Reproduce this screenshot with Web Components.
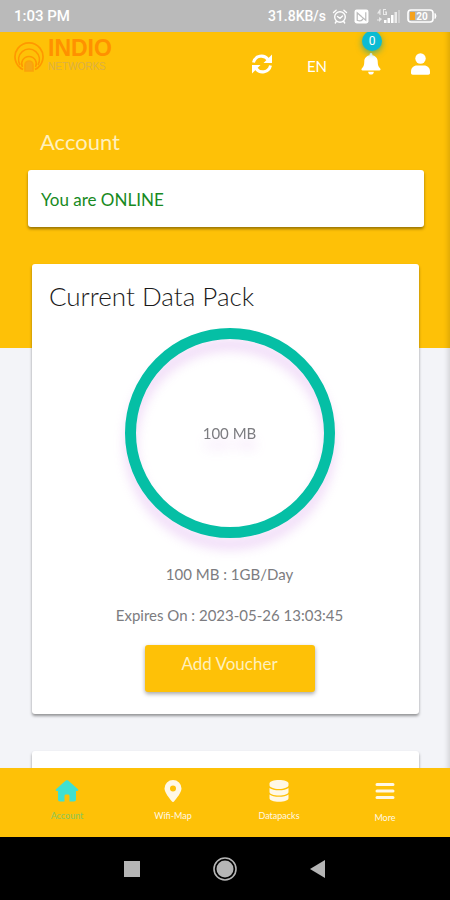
<!DOCTYPE html>
<html lang="en">
<head>
<meta charset="utf-8">
<meta name="viewport" content="width=device-width, initial-scale=1">
<title>Account</title>
<style>
  :root {
    --brand: #fec107;
    --page: #f3f4f8;
    --ring: #05bfa5;
    --active: #40e0d0;
    --muted: #7c7c80;
    --font: Lato, "Noto Sans", sans-serif;
    --system: Roboto, "Liberation Sans", sans-serif;
  }
  html, body { height: 100%; }
  body { margin: 0; font-family: var(--font); background: var(--page); }
</style>
</head>
<body>
<phone-screen>
  <status-bar slot="status" time="1:03 PM" speed="31.8KB/s" battery="20"></status-bar>
  <app-header slot="header" lang-code="EN" count="0"></app-header>
  <section-title>Account</section-title>
  <status-card>You are ONLINE</status-card>
  <data-card>
    <span slot="title">Current Data Pack</span>
    <usage-ring slot="ring">100 MB</usage-ring>
    <span slot="plan">100 MB : 1GB/Day</span>
    <span slot="expiry">Expires On : 2023-05-26 13:03:45</span>
    <voucher-button slot="action">Add Voucher</voucher-button>
  </data-card>
  <data-card empty></data-card>
  <tab-bar slot="tabs">
    <tab-item icon="home" active>Account</tab-item>
    <tab-item icon="pin">Wifi-Map</tab-item>
    <tab-item icon="database">Datapacks</tab-item>
    <tab-item icon="menu">More</tab-item>
  </tab-bar>
  <system-nav slot="system"></system-nav>
</phone-screen>

<script>
const define = (name, render) => customElements.define(name, class extends HTMLElement {
  constructor() {
    super();
    this.attachShadow({ mode: "open" });
  }
  connectedCallback() {
    const template = document.createElement("template");
    template.innerHTML = render(this);
    this.shadowRoot.replaceChildren(template.content.cloneNode(true));
  }
});

define("phone-screen", () => `
  <style>
    :host { display: flex; flex-direction: column; height: 100vh; overflow: hidden; }
    .app { flex: 1; min-height: 0; overflow: hidden; box-sizing: border-box;
      display: flex; flex-direction: column;
      background: linear-gradient(var(--brand) 316px, var(--page) 316px);
      box-shadow: inset -6px 0 6px -5px rgba(0,0,0,.18); }
    main { display: flex; flex-direction: column; padding: 24px 26px 0 28px; }
  </style>
  <slot name="status"></slot>
  <div class="app"><slot name="header"></slot><main><slot></slot></main></div>
  <slot name="tabs"></slot>
  <slot name="system"></slot>`);

define("status-bar", el => `
  <style>
    :host { display: flex; align-items: center; justify-content: space-between; flex: none;
      height: 32px; padding: 0 12px 0 14px; background: #bababa; color: #fff;
      font: 500 15px/20px var(--system); }
    .right { display: flex; align-items: center; gap: 6px; font-size: 14px; }
    svg { display: block; }
  </style>
  <span>${el.getAttribute("time")}</span>
  <div class="right">
    <span>${el.getAttribute("speed")}</span>
    <svg width="16" height="15" viewBox="0 0 15 15" fill="none" stroke="#fff" stroke-width="1.4" stroke-linecap="round"><circle cx="7.500" cy="8" r="5.300"/><path d="M1 3.500 3.600 1.200M14 3.500 11.400 1.200M5 7.500l2.500 1.800L10 7M3.800 12.500l-1 1.500M11.200 12.500l1 1.500"/></svg>
    <svg width="15" height="15" viewBox="0 0 14 14"><rect x=".5" y=".5" width="13" height="13" rx="2" fill="#fff"/><path d="M3 11V3.500l4 3.500M11 3v7.500L5 5.500M3 10.500c3 1.500 5 0 6-2" fill="none" stroke="#bababa" stroke-width="1.100"/></svg>
    <svg width="26" height="16" viewBox="0 0 26 16" fill="#fff"><path d="M5 1 2 5.500h2.500V7h1V1zM8 1h3v1H9v4h1.500V4.500H10v-1h2V7H8zM4 9l3 2-3 3v-1.500H2v-1h2z" opacity=".7"/><rect x="9" y="12" width="2.500" height="3"/><rect x="12.500" y="10" width="2.500" height="5"/><rect x="16" y="7" width="2.500" height="8"/><rect x="19.500" y="4" width="2.500" height="11" opacity=".7"/><rect x="23" y="2" width="2" height="13" opacity=".3"/></svg>
    <svg width="31" height="14" viewBox="0 0 31 14"><rect x="1" y="1" width="25" height="12" rx="3" fill="none" stroke="#fff" stroke-width="1.600"/><path d="M28 4.500q2 2.500 0 5z" fill="#fff" stroke="#fff"/><rect x="3" y="3" width="5" height="8" fill="#f5a21d"/><text x="15" y="10.500" font-size="10" font-weight="700" text-anchor="middle" fill="#fff">${el.getAttribute("battery")}</text></svg>
  </div>`);

define("brand-logo", () => `
  <style>
    :host { display: block; }
    a { display: flex; align-items: center; gap: 4px; color: #ff9100; text-decoration: none; }
    svg { display: block; }
    .name { display: block; font: 700 23px/20px "Liberation Sans", sans-serif; }
    .sub { display: block; padding-top: 3px; font: 400 10px/12px "Liberation Sans", sans-serif; color: #dcb044; }
  </style>
  <a href="#home" aria-label="Indio Networks">
    <svg width="30" height="32" viewBox="0 0 30 32" fill="none" stroke="#ff9800" stroke-width="1.700"><path d="M9 29.500A14 14 0 1 1 21 29.500"/><path d="M6 25a10.500 10.500 0 1 1 18 0M8.500 27a7.300 7.300 0 1 1 13 0" stroke-width="1.500"/><path d="M11 31v-6a4 4 0 0 1 8 0v6z" fill="#f7a814" stroke="#fba30b"/></svg>
    <span><span class="name">INDIO</span><span class="sub">NETWORKS</span></span>
  </a>`);

define("app-header", el => `
  <style>
    :host { display: flex; justify-content: space-between; align-items: flex-start; flex: none;
      height: 74px; padding: 6px 20px 0 14px; box-sizing: border-box; }
    .actions { display: flex; align-items: center; gap: 30px; padding-top: 12px; }
    button { position: relative; display: block; margin: 0; padding: 0; border: 0; background: none;
      color: #fff; font: 400 15px/24px var(--font); }
    .lang { padding: 4px 4px 0; }
    svg { display: block; }
    .badge { position: absolute; left: 1px; top: -22px; width: 20px; height: 20px; border-radius: 50%;
      background: #0bbbd3; box-shadow: 0 2px 6px rgba(11,160,150,.7);
      font: 400 12px/20px var(--system); text-align: center; }
  </style>
  <brand-logo></brand-logo>
  <div class="actions">
    <button aria-label="Refresh"><svg width="22" height="20" viewBox="0 0 22 20"><g fill="none" stroke="#fff" stroke-width="3"><path d="M2.500 8.500C4 1.500 13 0 17 5.500M19.500 11.500C18 18.500 9 20 5 14.500"/></g><path d="M21 .5V9h-8.500zM1 19.500V11h8.500z" fill="#fff"/></svg></button>
    <button class="lang" aria-label="Language">${el.getAttribute("lang-code")}</button>
    <button aria-label="Notifications"><svg width="20" height="22" viewBox="0 0 20 22" fill="#fff"><path d="M10 0c.8 0 1.400.6 1.400 1.400v.8c3.200.6 5.300 3 5.300 6.300 0 4 1 5.500 2.500 7 .8.800.3 2-.8 2H1.600c-1.100 0-1.600-1.200-.8-2 1.500-1.500 2.500-3 2.500-7 0-3.300 2.100-5.700 5.300-6.300v-.8C8.600.6 9.200 0 10 0zM7.200 18.700h5.600a2.800 2.800 0 0 1-5.600 0z"/></svg><span class="badge">${el.getAttribute("count")}</span></button>
    <button aria-label="Profile"><svg width="19" height="22" viewBox="0 0 19 22" fill="#fff"><circle cx="9.500" cy="5.500" r="5.200"/><path d="M6 12.500h7c3.500 0 6 2.500 6 6v1.500c0 1-.7 1.700-1.700 1.700H1.700C.7 21.700 0 21 0 20v-1.500c0-3.500 2.500-6 6-6z"/></svg></button>
  </div>`);

define("section-title", () => `
  <style>
    :host { display: block; padding: 0 12px; }
    h1 { margin: 0; font: 400 22px/24px var(--font); color: #fff0bd; }
  </style>
  <h1><slot></slot></h1>`);

define("status-card", () => `
  <style>
    :host { display: block; margin-top: 16px; padding: 20px 13px 17px; border-radius: 3px; background: #fff;
      box-shadow: 0 2px 3px rgba(0,0,0,.4); color: #178a22; font: 400 17px/20px var(--font); }
  </style>
  <slot></slot>`);

define("data-card", el => `
  <style>
    :host { display: flex; flex-direction: column; margin: 37px 5px 0 4px; padding: 18px 17px 22px;
      min-height: 60px; box-sizing: border-box; border-radius: 3px; background: #fff;
      box-shadow: 0 2px 3px rgba(0,0,0,.4); }
    h2 { margin: 0; font: 300 26px/28px var(--font); color: #1a1a1a; }
    .body { display: flex; flex-direction: column; align-items: center; padding: 18px 0 0 8px;
      color: var(--muted); font: 400 15px/20px var(--font); }
    p { margin: 0; }
    .plan { margin-top: 26px; }
    .expiry { margin: 21px 0 20px; }
  </style>
  ${el.hasAttribute("empty") ? "" : `
  <h2><slot name="title"></slot></h2>
  <div class="body">
    <slot name="ring"></slot>
    <p class="plan"><slot name="plan"></slot></p>
    <p class="expiry"><slot name="expiry"></slot></p>
    <slot name="action"></slot>
  </div>`}`);

define("usage-ring", () => `
  <style>
    :host { display: flex; align-items: center; justify-content: center; box-sizing: border-box;
      width: 210px; height: 210px; border: 11px solid var(--ring); border-radius: 50%;
      filter: drop-shadow(0 11px 6px rgba(190,90,220,.24)); }
  </style>
  <slot></slot>`);

define("voucher-button", () => `
  <style>
    :host { display: block; }
    button { display: block; margin: 0; padding: 9px 36px 18px; border: 0; border-radius: 3px;
      background: var(--brand); box-shadow: 0 2px 4px rgba(0,0,0,.35); color: #fff0bd;
      min-width: 170px; font: 400 17px/20px var(--font); white-space: nowrap; }
  </style>
  <button><slot></slot></button>`);

define("tab-bar", () => `
  <style>
    :host { display: block; flex: none; background: var(--brand); }
    nav { display: grid; grid-template-columns: repeat(4, 1fr); height: 69px; padding: 0 12px 0 14px; }
  </style>
  <nav><slot></slot></nav>`);

const tabIcons = {
  home: `<svg width="24" height="22" viewBox="0 0 24 22"><path fill="currentColor" d="M10.800.6 1 9.300c-.7.700-.3 1.700.7 1.700H3v8.500c0 1.200.8 2 2 2h4.500V16c0-1 .7-1.500 1.500-1.500h2c.8 0 1.500.5 1.500 1.500v5.500H19c1.200 0 2-.8 2-2V11h1.300c1 0 1.400-1 .7-1.700L13.200.6c-.7-.6-1.700-.6-2.400 0z"/></svg>`,
  pin: `<svg width="18" height="22" viewBox="0 0 18 22"><path fill="currentColor" fill-rule="evenodd" d="M9 0a8.500 8.500 0 0 1 8.500 8.500c0 4-5 10-7.500 13-.6.700-1.400.700-2 0-2.500-3-7.500-9-7.500-13A8.500 8.500 0 0 1 9 0zm0 5.500a3 3 0 1 0 0 6 3 3 0 0 0 0-6z"/></svg>`,
  database: `<svg width="20" height="22" viewBox="0 0 20 22" fill="currentColor"><path d="M10 0c5.300 0 9.500 1.500 9.500 3.500v1.800C19.500 7.300 15.300 9 10 9S.5 7.300.5 5.300V3.500C.5 1.500 4.700 0 10 0z"/><path d="M.5 8c2 1.500 5.500 2.300 9.500 2.300s7.500-.8 9.500-2.300v4c0 2-4.200 3.500-9.500 3.500S.5 14 .5 12zM.5 14.500c2 1.500 5.500 2.300 9.500 2.300s7.500-.8 9.500-2.300v3.800c0 2-4.200 3.500-9.500 3.500S.5 20.300.5 18.300z"/></svg>`,
  menu: `<svg width="20" height="24" viewBox="0 0 20 24"><path stroke="currentColor" stroke-width="3" stroke-linecap="round" d="M2 4.500h16M2 11h16M2 17.500h16"/></svg>`
};

define("tab-item", el => `
  <style>
    :host { display: block; color: #fff8e6; }
    :host([active]) { color: var(--active); }
    a { display: flex; flex-direction: column; align-items: center; gap: 9px; padding-top: 12px;
      color: inherit; text-decoration: none; font: 400 9px/10px var(--font); }
    svg { display: block; }
    :host([active]) span { color: #8cc75c; }
  </style>
  <a href="#${el.getAttribute("icon")}">${tabIcons[el.getAttribute("icon")]}<span><slot></slot></span></a>`);

define("system-nav", () => `
  <style>
    :host { display: flex; flex: none; align-items: center; justify-content: center; gap: 73px;
      height: 63px; background: #000; }
    button { display: block; margin: 0; padding: 0; border: 0; background: none; }
    svg { display: block; }
  </style>
  <button aria-label="Recent apps"><svg width="16" height="16"><rect width="16" height="16" fill="#b5b5b5"/></svg></button>
  <button aria-label="Home"><svg width="24" height="24"><circle cx="12" cy="12" r="11" fill="none" stroke="#b5b5b5" stroke-width="1.600"/><circle cx="12" cy="12" r="8.500" fill="#b5b5b5"/></svg></button>
  <button aria-label="Back"><svg width="16" height="18"><path d="M15 0v18L0 9z" fill="#b5b5b5"/></svg></button>`);
</script>
</body>
</html>
